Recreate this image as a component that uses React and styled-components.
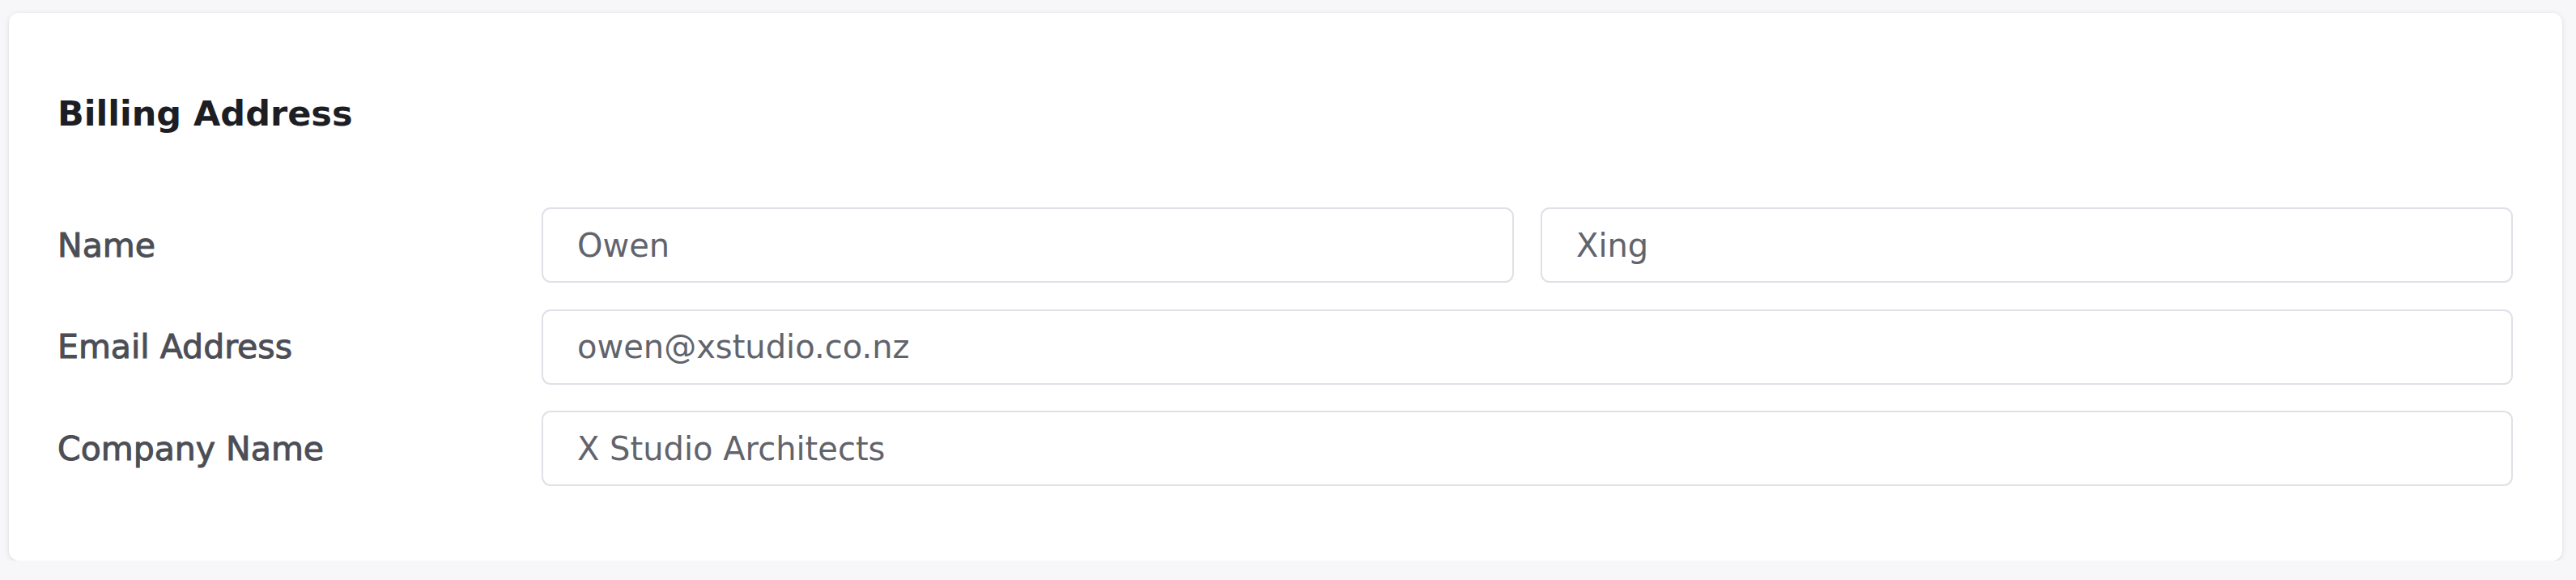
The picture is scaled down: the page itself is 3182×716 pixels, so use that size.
import React from "react";
import styled, { createGlobalStyle } from "styled-components";

const GlobalStyle = createGlobalStyle`
  html, body {
    margin: 0;
    padding: 0;
    background: #f7f7f9;
    overflow: hidden;
  }
  * { box-sizing: border-box; }
`;

const Page = styled.div`
  padding: 16px 17px 0 11px;
  font-family: "DejaVu Sans", "Noto Sans", sans-serif;
`;

const Card = styled.section`
  background: #ffffff;
  border-radius: 12px;
  box-shadow: 0 1px 7px rgba(20, 24, 40, 0.1), 0 1px 2px rgba(20, 24, 40, 0.05);
  padding: 100px 61px 92px 60px;
`;

const Title = styled.h2`
  margin: 0 0 91px;
  font-size: 43px;
  line-height: 49px;
  font-weight: 700;
  color: #1d1e24;
`;

const Form = styled.div`
  display: flex;
  flex-direction: column;
  gap: 32.5px;
`;

const Row = styled.div`
  display: grid;
  grid-template-columns: 598px 1fr;
  align-items: center;
`;

const Label = styled.label`
  font-size: 41px;
  line-height: 48px;
  font-weight: 400;
  color: #4c4e56;
  -webkit-text-stroke: 1px #4c4e56;
`;

const Fields = styled.div`
  display: grid;
  grid-template-columns: ${(p) => (p.$split ? "1fr 1fr" : "1fr")};
  gap: 33px;
`;

const Input = styled.input`
  display: block;
  width: 100%;
  height: 93px;
  padding: 0 40px 0 42px;
  border: 2px solid #dfe1e7;
  border-radius: 11px;
  background: #ffffff;
  font-family: "DejaVu Sans", "Noto Sans", sans-serif;
  font-size: 40px;
  font-weight: 400;
  color: #62646c;
  outline: none;
`;

const rows = [
  { label: "Name", values: ["Owen", "Xing"] },
  { label: "Email Address", values: ["owen@xstudio.co.nz"] },
  { label: "Company Name", values: ["X Studio Architects"] },
];

export default function App() {
  return (
    <>
      <GlobalStyle />
      <Page>
        <Card>
          <Title>Billing Address</Title>
          <Form>
            {rows.map((row) => (
              <Row key={row.label}>
                <Label>{row.label}</Label>
                <Fields $split={row.values.length > 1}>
                  {row.values.map((v) => (
                    <Input key={v} defaultValue={v} readOnly />
                  ))}
                </Fields>
              </Row>
            ))}
          </Form>
        </Card>
      </Page>
    </>
  );
}
